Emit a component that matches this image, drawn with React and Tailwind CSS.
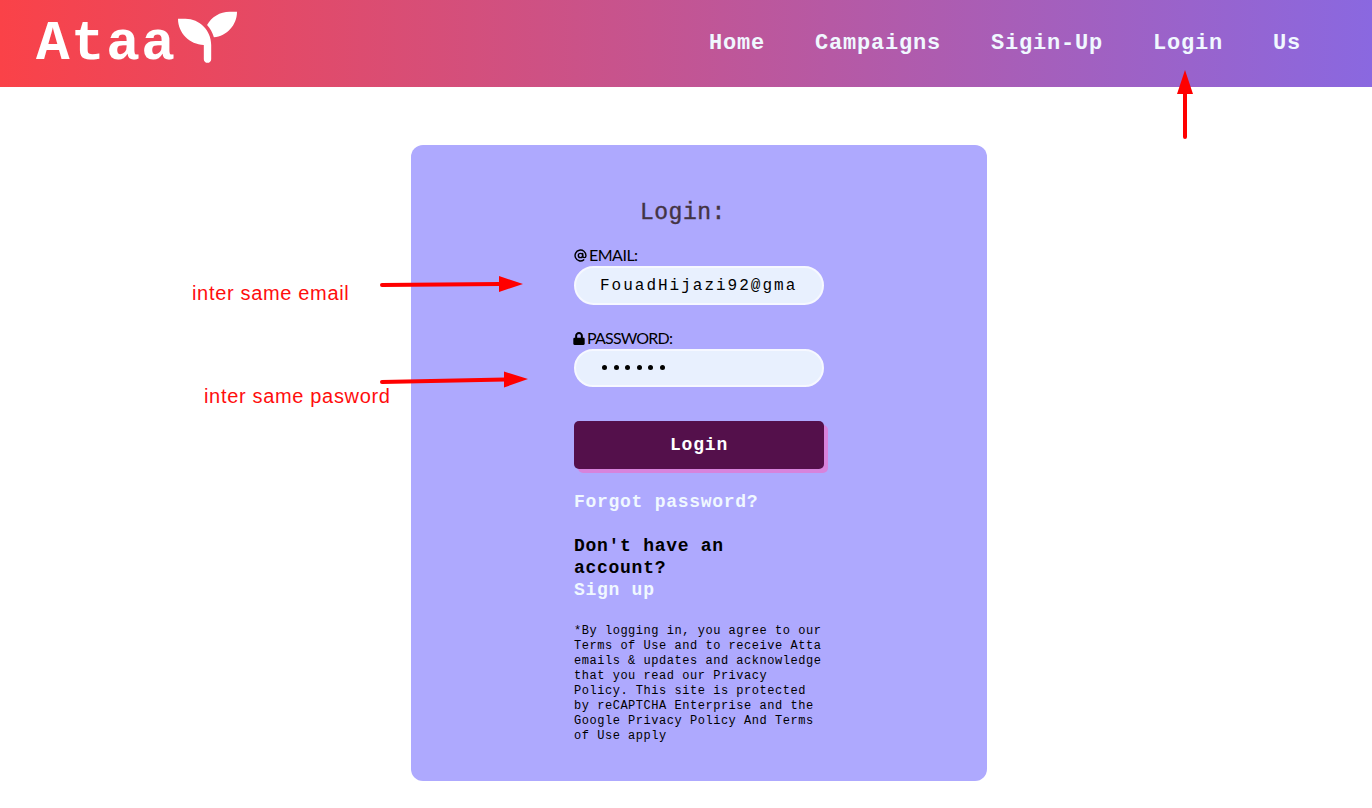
import { FaLock } from "react-icons/fa";
import { AtSign } from "lucide-react";

const links = ["Home", "Campaigns", "Sigin-Up", "Login", "Us"];

function Seedling() {
  return (
    <svg viewBox="0 0 512 512" fill="currentColor" className="mt-2 h-[59px] w-[59px]">
      <path d="M64 94H0c0 123.7 100.3 226 224 226v124c0 17.7 14.3 32 32 32s32-14.3 32-32V320C288 196.3 187.7 94 64 94z" />
      <path d="M448 32c-84.2 0-157.4 46.500-195.700 115.200 27.700 30.200 48.200 66.900 59 107.600C424 243.100 512 147.900 512 32h-64z" />
    </svg>
  );
}

function Header() {
  return (
    <header className="flex h-[87px] items-start justify-between bg-linear-to-r/srgb from-[#fa4248] to-[#8a68e0] pr-[71px] pl-9">
      <div className="flex items-start text-white">
        <span className="h-[87px] w-[142px] text-[56px] leading-[89px] font-bold tracking-[1.5px] whitespace-nowrap">Ataa</span>
        <Seedling />
      </div>
      <nav className="flex gap-[50px] text-[22px] leading-[87px] font-bold tracking-[0.8px] text-[#f0f8ff]">
        {links.map((l) => (
          <a key={l} href="#">{l}</a>
        ))}
      </nav>
    </header>
  );
}

function LoginCard() {
  return (
    <section className="mt-[58px] ml-[411px] h-[636px] w-[576px] rounded-xl bg-[#aea9fe] pl-[163px]">
      <form className="flex w-[250px] flex-col pt-[53px] text-black">
        <h1 className="h-[30px] pl-[66px] text-[23px] leading-[30px] font-normal tracking-[0.5px] text-[#433343] [-webkit-text-stroke:0.4px_#433343]">Login:</h1>
        <label className="mt-[17px] flex h-5 items-center gap-[2px] font-['Lato',sans-serif] text-[16px] leading-5 tracking-[-0.5px]">
          <AtSign className="h-[13px] w-[13px]" strokeWidth={2.6} />EMAIL:
        </label>
        <input type="text" defaultValue="FouadHijazi92@gmail.com" className="mt-px h-[39px] w-full rounded-full border-2 border-[#f6f8ff] bg-[#e8f0fe] px-6 text-[16px] tracking-[2px] outline-none" />
        <label className="mt-[23px] flex h-5 items-center gap-0.5 font-['Lato',sans-serif] text-[16px] leading-5 tracking-[-0.8px]">
          <FaLock className="-ml-px h-[13px] w-[12px]" />PASSWORD:
        </label>
        <div className="mt-px flex h-[38px] items-center gap-[6.6px] rounded-full border-2 border-[#f6f8ff] bg-[#e8f0fe] pb-0.5 pl-[26px]">
          {[0, 1, 2, 3, 4, 5].map((i) => (
            <span key={i} className="h-[5px] w-[5px] rounded-full bg-black" />
          ))}
        </div>
        <button type="button" className="mt-[34px] h-12 rounded-[5px] bg-[#54104b] text-[18px] leading-[46px] font-bold tracking-[0.8px] text-white shadow-[4px_4px_0_#d783dc]">Login</button>
        <div className="mt-[22px] flex flex-col text-[18px] leading-[22px] font-bold tracking-[0.72px]">
          <a href="#" className="text-[#f0f8ff]">Forgot password?</a>
          <p className="mt-[22px] w-[200px]">Don't have an account?</p>
          <a href="#" className="text-[#f0f8ff]">Sign up</a>
        </div>
        <p className="mt-[23px] text-[12px] leading-[15px] tracking-[0.53px] whitespace-nowrap">
          *By logging in, you agree to our<br />
          Terms of Use and to receive Atta<br />
          emails &amp; updates and acknowledge<br />
          that you read our Privacy<br />
          Policy. This site is protected<br />
          by reCAPTCHA Enterprise and the<br />
          Google Privacy Policy And Terms<br />
          of Use apply
        </p>
      </form>
    </section>
  );
}

function Annotations() {
  return (
    <div className="pointer-events-none absolute inset-0 font-['Liberation_Sans',sans-serif] text-[20px] leading-6 tracking-[0.67px] whitespace-nowrap text-[#ff0d0d]">
      <svg className="absolute inset-0" width="1372" height="808" fill="#ff0000" stroke="#ff0000" strokeWidth="4" strokeLinecap="round">
        <path d="M382 285L500 284M382 382L505 379.5M1185 137V92" />
        <path stroke="none" d="M499 276L523 284L499 292ZM504 371.5L528 379L504 387.5ZM1185 70L1193 94H1177Z" />
      </svg>
      <span className="absolute top-[281px] left-[192px]">inter same email</span>
      <span className="absolute top-[384px] left-[204px]">inter same pasword</span>
    </div>
  );
}

export default function App() {
  return (
    <div className="relative h-[808px] w-[1372px] overflow-hidden bg-white font-['Liberation_Mono',monospace]">
      <Header />
      <LoginCard />
      <Annotations />
    </div>
  );
}
